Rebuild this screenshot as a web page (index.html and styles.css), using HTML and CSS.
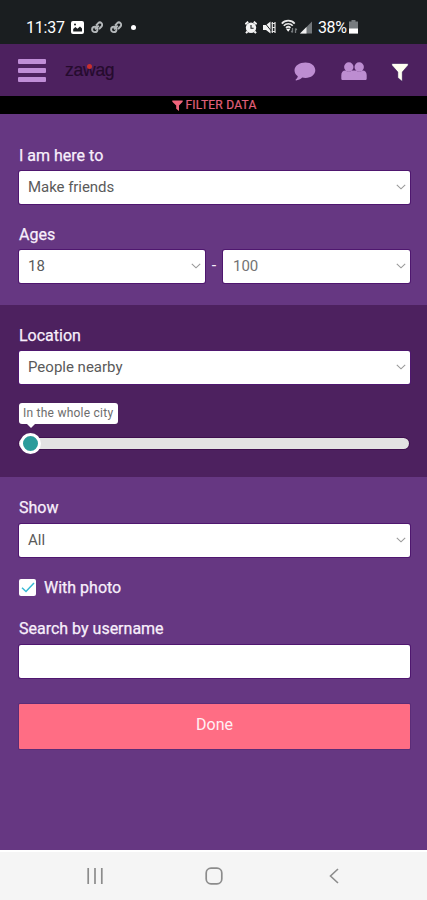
FILE: index.html
```html
<!DOCTYPE html>
<html lang="en">
<head>
<meta charset="utf-8">
<meta name="viewport" content="width=device-width, initial-scale=1">
<title>Zawag</title>
<link rel="stylesheet" href="styles.css">
</head>
<body>
<div class="status">
  <div class="status-left">
    <span class="time">11:37</span>
    <svg class="ic-photo" width="13" height="13" viewBox="0 0 13 13"><rect width="13" height="13" rx="2" fill="#fff"/><path d="M2.2 10.4V8l2.2-2 2 1.800L9 5.600l2 2v2.800z" fill="#1a1e20"/><circle cx="4" cy="3.500" r="1" fill="#1a1e20"/></svg>
    <svg class="ic-link" width="12" height="13" viewBox="0 0 12 13"><g fill="none" stroke="#b4b8ba" stroke-width="1.900"><circle cx="3.800" cy="8.400" r="2.700"/><path d="M5 4.600l2.200-2.400a2.300 2.300 0 0 1 3.300 3.300L8 8.200M4 8.300l3.800-3.600"/></g></svg>
    <svg class="ic-link" width="12" height="13" viewBox="0 0 12 13"><g fill="none" stroke="#b4b8ba" stroke-width="1.900"><circle cx="3.800" cy="8.400" r="2.700"/><path d="M5 4.600l2.200-2.400a2.300 2.300 0 0 1 3.300 3.300L8 8.200M4 8.300l3.800-3.600"/></g></svg>
    <span class="dot"></span>
  </div>
  <div class="status-right">
    <svg width="12" height="13" viewBox="0 0 12 13"><path d="M.3 3.200L3.200.700M11.700 3.200L8.800.700M2.500 10.500L1 12.200M9.500 10.500L11 12.200" stroke="#f2f2f2" stroke-width="2"/><circle cx="6" cy="6.800" r="5.200" fill="#f2f2f2"/><path d="M6 4v3.200h2.600" fill="none" stroke="#1a1e20" stroke-width="1.100"/></svg>
    <svg class="ic-mute" width="13" height="13" viewBox="0 0 13 13"><path d="M0 4h3l4.500-3.500v12L3 9H0z" fill="#f2f2f2"/><path d="M1 1l9 11" stroke="#1a1e20" stroke-width="1"/><path d="M8.500 2.500h3.500M9 6.500h2.500M8.500 10.500h3.500M9.300 1v11M12 1v11" stroke="#e6e6e6" stroke-width="1.200"/></svg>
    <svg class="ic-wifi" width="17" height="15" viewBox="0 0 17 15"><g fill="none" stroke="#e8e8e8" stroke-width="1.700"><path d="M.8 4.600C4 .700 10.500.700 13.700 4.600M2.800 6.700c2.300-2.600 6.600-2.600 8.900 0M5 8.800c1.300-1.200 3.200-1.200 4.500 0"/></g><path d="M7.200 12.800L5 9.800h4.400z" fill="#fff"/><path d="M11.500 9v4.500M10.200 12l1.300 1.500M14.500 14V9.500M15.800 11l-1.300-1.500" stroke="#777c7e" stroke-width="1.300" fill="none"/></svg>
    <svg class="ic-signal" width="12" height="13" viewBox="0 0 12 13"><path d="M0 12.500L12 .5v12z" fill="#72777a"/><path d="M0 12.500l6.500-6.500v6.500z" fill="#f0f0f0"/></svg>
    <span class="percent">38%</span>
    <svg class="ic-battery" width="9" height="14" viewBox="0 0 9 14"><path d="M2.500 0h4v1.500H9v12H0v-12h2.500z" fill="#777c7f"/><path d="M0 8.500h9v5H0z" fill="#fff"/></svg>
  </div>
</div>

<header class="bar">
  <div class="burger"><i></i><i></i><i></i></div>
  <div class="logo">za<span class="w">w<b></b></span>ag</div>
  <nav class="tools">
    <svg width="22" height="20" viewBox="0 0 22 20"><path d="M11.500.5C17.200.5 21.300 3.900 21.300 8.200s-4.200 7.700-9.800 7.700c-1.200 0-2.300-.1-3.300-.4-1.800 1.800-3.800 2.700-6.100 2.900-.6 0-.8-.5-.3-.9 1.100-.9 1.800-2 2-3.300C1.700 12.800.5 10.700.5 8.200.5 3.900 5.500.5 11.500.5z" fill="#bd8dd1"/></svg>
    <svg class="ic-group" width="26" height="19" viewBox="0 0 26 19"><g fill="#bd8dd1"><circle cx="7.800" cy="5" r="4.700"/><circle cx="18.200" cy="5" r="4.700"/><path d="M.3 16.500v-3.300c0-2.700 1.600-4.700 4-4.700 2 1.200 5 1.200 7 0h3.400c2 1.200 5 1.200 7 0 2.400 0 4 2 4 4.700v3.300c0 1-.6 1.500-1.600 1.500H1.900c-1 0-1.600-.5-1.600-1.500z"/></g></svg>
    <svg class="ic-funnel" width="18" height="19" viewBox="0 0 18 19"><path d="M.8.5h16.400v1.700L11.300 9v9.500l-4.500-3.800V9L.8 2.200z" fill="#fffff2" stroke="#250048" stroke-width=".5"/></svg>
  </nav>
</header>

<div class="strip">
  <svg width="11" height="11" viewBox="0 0 11 11"><path d="M.3.500h10.400v1.200L7 5.500V11L4.200 8.700V5.500L.3 1.700z" fill="#f0647b"/></svg>
  <span>FILTER DATA</span>
</div>

<main>
  <section class="block first">
    <div class="label here">I am here to</div>
    <div class="field"><span class="make">Make friends</span><svg class="chev" viewBox="0 0 10 6"><path d="M.8.8L5 4.800 9.200.8"/></svg></div>
    <div class="label ages">Ages</div>
    <div class="range">
      <div class="field"><span>18</span><svg class="chev" viewBox="0 0 10 6"><path d="M.8.8L5 4.800 9.200.8"/></svg></div>
      <span class="dash">-</span>
      <div class="field"><span class="hundred">100</span><svg class="chev" viewBox="0 0 10 6"><path d="M.8.8L5 4.800 9.200.8"/></svg></div>
    </div>
  </section>

  <section class="block second">
    <div class="label location">Location</div>
    <div class="field"><span class="nearby">People nearby</span><svg class="chev" viewBox="0 0 10 6"><path d="M.8.8L5 4.800 9.200.8"/></svg></div>
    <div class="tip">In the whole city</div>
    <div class="slider"><div class="track"></div><div class="knob"></div></div>
  </section>

  <section class="block third">
    <div class="label">Show</div>
    <div class="field"><span>All</span><svg class="chev" viewBox="0 0 10 6"><path d="M.8.8L5 4.800 9.200.8"/></svg></div>
    <div class="check"><span class="box"><svg width="14" height="11" viewBox="0 0 14 11"><path d="M1 5.800l4 3.700L13 1" fill="none" stroke="#36b9d4" stroke-width="1.500"/></svg></span><span class="label photo">With photo</span></div>
    <div class="label search">Search by username</div>
    <div class="field"></div>
    <div class="done">Done</div>
  </section>
</main>

<footer class="nav">
  <svg width="16" height="16" viewBox="0 0 16 16"><path d="M1.200 0v16M8 0v16M14.800 0v16" stroke="#8c8c8c" stroke-width="1.700"/></svg>
  <svg class="home" width="18" height="18" viewBox="0 0 18 18"><rect x="1.200" y="1.200" width="15.600" height="15.600" rx="4.800" fill="none" stroke="#8c8c8c" stroke-width="1.700"/></svg>
  <svg class="back" width="10" height="16" viewBox="0 0 10 16"><path d="M9 1L1.500 8 9 15" fill="none" stroke="#8c8c8c" stroke-width="1.600"/></svg>
</footer>
</body>
</html>
```
FILE: styles.css
```css
* { box-sizing: border-box; }
body {
  margin: 0;
  width: 427px;
  height: 900px;
  display: flex;
  flex-direction: column;
  overflow: hidden;
  background: #663782;
  font-family: Roboto, "Liberation Sans", sans-serif;
  color: #f8effb;
}
svg { display: block; flex: none; }
.status {
  height: 44px;
  flex: none;
  background: #1a1e20;
  color: #fff;
  display: flex;
  justify-content: space-between;
  padding: 11px 69px 0 26px;
}
.status-left, .status-right { display: flex; align-items: center; height: 32px; }
.time { width: 39px; font-size: 16px; letter-spacing: -.2px; white-space: nowrap; }
.ic-photo { margin-left: 6px; }
.ic-link { margin-left: 7px; }
.dot { width: 5px; height: 5px; border-radius: 50%; background: #fff; margin-left: 9px; }
.ic-mute { margin-left: 6px; }
.ic-wifi { margin: -1px 0 0 5px; }
.ic-signal { margin-left: 2px; }
.percent { width: 30px; margin-left: 6px; font-size: 16px; letter-spacing: -.4px; }
.ic-battery { margin-left: 1px; }

.bar {
  height: 52px;
  flex: none;
  background: #4d215f;
  display: flex;
  align-items: center;
  padding: 0 18px;
}
.burger { width: 28px; display: flex; flex-direction: column; gap: 4px; }
.burger i { height: 5px; border-radius: 1px; background: #c08ed7; }
.logo { margin: 0 0 1px 19px; font: 17.5px/22px "Liberation Sans", sans-serif; letter-spacing: -.25px; color: #250b2d; -webkit-text-stroke: .2px #250b2d; }
.w { position: relative; }
.w b { position: absolute; left: 4px; top: 4px; width: 5px; height: 5px; border-radius: 50%; background: #c9302f; }
.tools { margin-left: auto; display: flex; align-items: center; margin-top: 4px; }
.ic-group { margin: -2px 0 0 25px; }
.ic-funnel { margin-left: 24px; }

.strip {
  height: 18px;
  flex: none;
  background: #000;
  color: #e0607a;
  display: flex;
  align-items: center;
  justify-content: center;
  gap: 2px;
  font-size: 12px;
  line-height: 18px;
  letter-spacing: .25px;
  padding-left: 2px;
  -webkit-text-stroke: .2px #e0607a;
}
main { flex: 1; }
.block { padding: 0 17px 0 19px; }
.first { height: 191px; padding-top: 32px; }
.second { height: 172px; padding-top: 20px; background: #4d215f; }
.third { padding-top: 21px; }
.label { font-size: 16px; line-height: 20px; height: 20px; font-weight: 400; white-space: nowrap; -webkit-text-stroke: .25px #f8effb; }
.field {
  height: 33px;
  margin-top: 6px;
  background: #fff;
  border-radius: 2px;
  box-shadow: 0 0 0 1px #4f176f;
  display: flex;
  align-items: center;
  justify-content: space-between;
  padding: 0 4px 1px 9px;
  font-size: 15px;
  color: #5a5a5a;
}
.here + .field, .range .field { margin-top: 5px; }
.make { letter-spacing: -.05px; }
.chev { width: 10px; height: 6px; margin-left: auto; }
.chev path { fill: none; stroke: #999; stroke-width: 1.1; }
.ages { margin-top: 21px; }
.range { display: flex; align-items: center; }
.range .field { width: 186px; }
.range .field:last-child { width: 187px; padding-left: 10px; }
.dash { width: 18px; text-align: center; margin-top: 3px; }
.hundred { color: #737373; }
.location { padding-top: 1px; }
.tip {
  position: relative;
  width: 99px;
  height: 21px;
  margin-top: 19px;
  border-radius: 3px;
  background: #fff;
  color: #6d6d6d;
  font-size: 12px;
  line-height: 20px;
  letter-spacing: .24px;
  padding-left: 4px;
  white-space: nowrap;
}
.tip::after {
  content: "";
  position: absolute;
  left: 7px;
  top: 20px;
  border: 5px solid transparent;
  border-top-color: #fff;
  border-bottom: 0;
}
.slider { position: relative; margin-top: 9px; height: 21px; display: flex; align-items: center; }
.track { flex: 1; height: 11px; margin-right: 1px; border-radius: 6px; background: #e3e2e3; box-shadow: 0 0 0 1px #40104f; }
.knob { position: absolute; left: 1px; top: 0; width: 21px; height: 21px; border-radius: 50%; background: #2b9c9b; border: 3px solid #fff; }
.check { display: flex; align-items: center; margin-top: 20px; height: 20px; }
.box { width: 17px; height: 17px; background: #fff; border-radius: 2px; display: flex; align-items: center; justify-content: center; }
.photo { margin-left: 8px; padding-top: 1px; }
.search { margin-top: 22px; }
.done {
  height: 45px;
  margin-top: 26px;
  background: #ff6d84;
  border-radius: 1px;
  font-size: 16px;
  line-height: 42px;
  text-align: center;
  color: #fff0f4;
  box-shadow: 0 0 0 1px #5b2c77;
}
.nav {
  height: 50px;
  flex: none;
  background: #f5f5f5;
  border-top: 2px solid #fff;
  display: flex;
  align-items: center;
  padding-left: 87px;
}
.home { margin-left: 102px; }
.back { margin-left: 106px; }
```
